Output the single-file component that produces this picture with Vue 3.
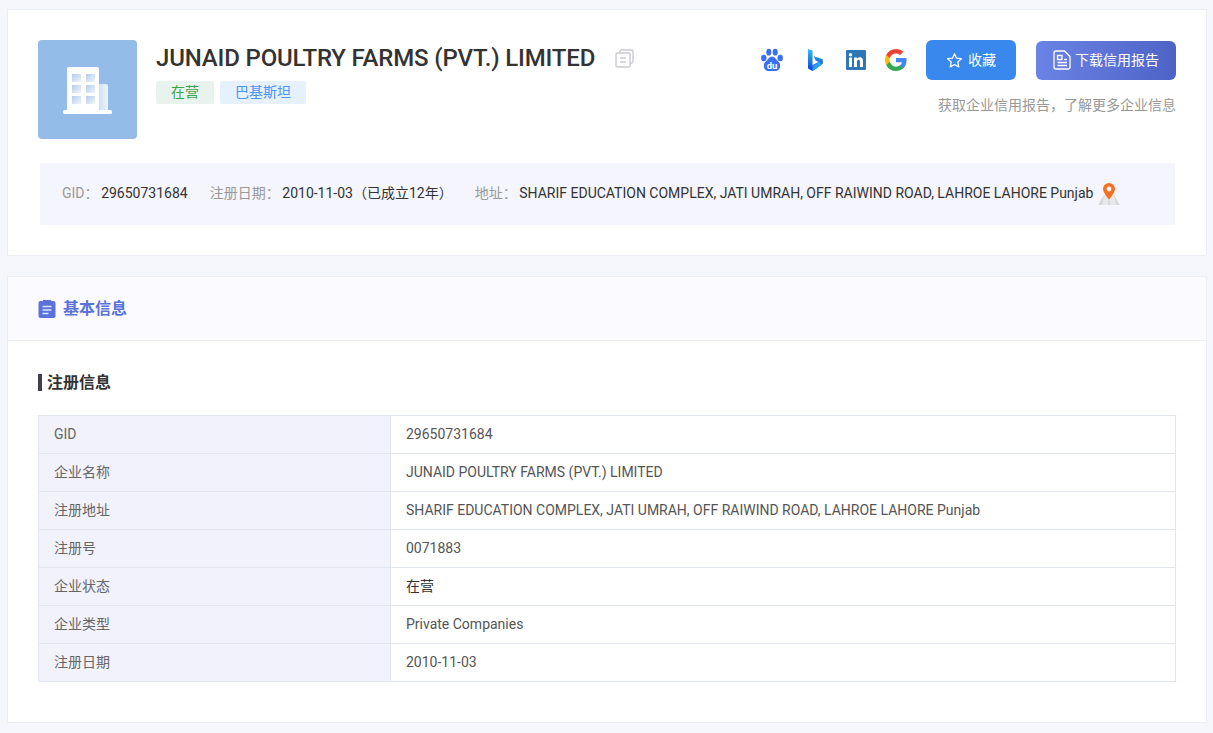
<script setup>
const rows = [
  ['GID', '29650731684'],
  ['企业名称', 'JUNAID POULTRY FARMS (PVT.) LIMITED'],
  ['注册地址', 'SHARIF EDUCATION COMPLEX, JATI UMRAH, OFF RAIWIND ROAD, LAHROE LAHORE Punjab'],
  ['注册号', '0071883'],
  ['企业状态', '在营', true],
  ['企业类型', 'Private Companies'],
  ['注册日期', '2010-11-03'],
]
</script>

<template>
  <div class="page">
    <section class="card head">
      <div class="top">
        <div class="logo">
          <svg width="50" height="50" viewBox="0 0 50 50">
            <defs>
              <linearGradient id="win" x1="0" y1="0" x2="1" y2="1">
                <stop offset="0" stop-color="#b5cdea" />
                <stop offset="1" stop-color="#f0f5fb" />
              </linearGradient>
              <linearGradient id="wing" x1="0" y1="0" x2="1" y2="0">
                <stop offset="0" stop-color="#cfe0f3" />
                <stop offset="1" stop-color="#eef4fb" />
              </linearGradient>
            </defs>
            <path d="M36 18h7a2 2 0 0 1 2 2v25h-9z" fill="url(#wing)" />
            <path d="M4 3a2 2 0 0 1 2-2h28a2 2 0 0 1 2 2v43H4z" fill="#fff" />
            <rect x="0" y="44" width="49" height="4" rx="1.500" fill="#fff" />
            <g fill="url(#win)">
              <rect x="9" y="8" width="9" height="8" /><rect x="23" y="8" width="9" height="8" />
              <rect x="9" y="19" width="9" height="8" /><rect x="23" y="19" width="9" height="8" />
              <rect x="9" y="30" width="9" height="8" /><rect x="23" y="30" width="9" height="8" />
            </g>
          </svg>
        </div>
        <div class="main">
          <div class="title-row">
            <h1>JUNAID POULTRY FARMS (PVT.) LIMITED</h1>
            <svg class="copy" width="19" height="19" viewBox="0 0 19 19" fill="none" stroke="#c9c9d3" stroke-width="1.400">
              <path d="M5 4V2.600A1.600 1.600 0 0 1 6.600 1h9.800A1.600 1.600 0 0 1 18 2.600v9.800a1.600 1.600 0 0 1-1.600 1.600H15" />
              <rect x="1" y="4" width="14" height="14" rx="1.600" />
              <path d="M5 9h6M5 13h6" />
            </svg>
          </div>
          <div class="tags">
            <span class="tag green">在营</span>
            <span class="tag blue">巴基斯坦</span>
          </div>
        </div>
        <div class="side">
          <div class="actions">
            <svg class="ico baidu" width="24" height="24" viewBox="0 0 24 24" fill="#386ff5">
              <ellipse cx="3.800" cy="10" rx="2.700" ry="3.300" />
              <ellipse cx="8.800" cy="4.200" rx="2.500" ry="3.400" />
              <ellipse cx="15.200" cy="4.200" rx="2.500" ry="3.400" />
              <ellipse cx="20.200" cy="10" rx="2.700" ry="3.300" />
              <path d="M12 8.500c2.500 0 3.400 2.400 5 3.800 1.800 1.500 3.200 3 3.200 5.200 0 3.300-2.200 5.500-4.700 5.500H8.500c-2.500 0-4.700-2.200-4.700-5.500 0-2.200 1.400-3.700 3.200-5.200 1.600-1.400 2.500-3.800 5-3.800z" />
              <text x="12" y="21" text-anchor="middle" class="du">du</text>
            </svg>
            <svg class="ico bing" width="24" height="24" viewBox="0 0 24 24">
              <defs>
                <linearGradient id="b1" x1="0" y1="0" x2="0" y2="1">
                  <stop offset="0" stop-color="#37bdf5" />
                  <stop offset="1" stop-color="#0a3fd6" />
                </linearGradient>
                <linearGradient id="b2" x1="0" y1="0" x2="1" y2="1">
                  <stop offset="0" stop-color="#1a6fe8" />
                  <stop offset="1" stop-color="#3fd0f2" />
                </linearGradient>
              </defs>
              <path d="M6 1l4.500 1.600v14.700l6-3.400-2.900-1.400-1.800-4.300 9 3.100v4.500L10.500 23 6 20.500z" fill="url(#b1)" />
              <path d="M10.500 23l8.300-5.200v-2.600L17 12.500l-.5 1.400-6 3.400z" fill="url(#b2)" />
            </svg>
            <svg class="ico li" width="20" height="20" viewBox="0 0 20 20">
              <rect width="20" height="20" rx="1.200" fill="#2e76b4" />
              <rect x="3" y="7.500" width="3" height="9.500" fill="#fff" />
              <circle cx="4.500" cy="4.700" r="1.700" fill="#fff" />
              <path d="M8 7.500h2.900v1.300c.5-.9 1.600-1.500 2.900-1.500 2.600 0 3.200 1.700 3.200 4V17h-3v-5c0-1.200-.2-2.200-1.500-2.200S11 10.800 11 12v5H8z" fill="#fff" />
            </svg>
            <svg class="ico" width="24" height="24" viewBox="0 0 24 24">
              <path fill="#4285f4" d="M22.560 12.250c0-.780-.070-1.530-.200-2.250H12v4.260h5.920a5.060 5.060 0 0 1-2.200 3.320v2.770h3.570c2.080-1.920 3.270-4.740 3.270-8.100z" />
              <path fill="#34a853" d="M12 23c2.970 0 5.460-.980 7.280-2.660l-3.570-2.770c-.980.660-2.230 1.060-3.710 1.060-2.860 0-5.290-1.930-6.160-4.530H2.180v2.840A11 11 0 0 0 12 23z" />
              <path fill="#fbbc05" d="M5.840 14.100a6.600 6.600 0 0 1 0-4.200V7.070H2.180a11 11 0 0 0 0 9.860z" />
              <path fill="#ea4335" d="M12 5.380c1.620 0 3.060.560 4.210 1.640l3.150-3.150C17.450 2.090 14.970 1 12 1A11 11 0 0 0 2.180 7.070L5.840 9.900C6.710 7.310 9.140 5.380 12 5.380z" />
            </svg>
            <button class="btn fav">
              <svg width="17" height="17" viewBox="0 0 24 24" fill="none" stroke="#fff" stroke-width="1.800" stroke-linejoin="round">
                <path d="M12 2.500l2.900 6.200 6.800.8-5 4.700 1.300 6.800-6-3.400-6 3.400 1.300-6.800-5-4.700 6.800-.8z" />
              </svg>
              收藏
            </button>
            <button class="btn dl">
              <svg width="18" height="20" viewBox="0 0 18 20" fill="none" stroke="#fff" stroke-width="1.300">
                <path d="M11.500 1H3a2 2 0 0 0-2 2v14a2 2 0 0 0 2 2h12a2 2 0 0 0 2-2V6.500z" />
                <path d="M4.500 5.500h4.500v4H4.500zM11 9.500h3M4.500 12.500h9.500M4.500 15.500h9.500" />
              </svg>
              下载信用报告
            </button>
          </div>
          <p class="hint">获取企业信用报告，了解更多企业信息</p>
        </div>
      </div>
      <div class="info">
        <span class="k">GID：</span><span class="v g1">29650731684</span>
        <span class="k">注册日期：</span><span class="v g2">2010-11-03（已成立12年）</span>
        <span class="k">地址：</span><span class="v">SHARIF EDUCATION COMPLEX, JATI UMRAH, OFF RAIWIND ROAD, LAHROE LAHORE Punjab</span>
        <svg class="pin" width="24" height="24" viewBox="0 0 24 24">
          <path d="M7 13L1 23h22l-6-10-5 3z" fill="#d9d9db" />
          <path d="M7 13l-1.500 10h5L12 16zM17 13l1.500 10h-5L12 16z" fill="#e8e8ea" />
          <path d="M12 1a6 6 0 0 0-6 6c0 4 6 10.500 6 10.500S18 11 18 7a6 6 0 0 0-6-6z" fill="#f5701f" />
          <circle cx="12" cy="7" r="2.400" fill="#fff" />
        </svg>
      </div>
    </section>

    <section class="card basic">
      <header class="bar">
        <svg width="18" height="19" viewBox="0 0 18 19">
          <path d="M2.500 2H5V1h8v1h2.500A2 2 0 0 1 17.500 4v13a2 2 0 0 1-2 2h-13a2 2 0 0 1-2-2V4a2 2 0 0 1 2-2z" fill="#5a73dc" />
          <path d="M4.500 7.500h9M4.500 11h9M4.500 14.500h6" stroke="#dfe4f8" stroke-width="1.300" />
        </svg>
        <h2>基本信息</h2>
      </header>
      <div class="body">
        <h3>注册信息</h3>
        <table>
          <tr v-for="r in rows" :key="r[0]">
            <th>{{ r[0] }}</th>
            <td :class="{ strong: r[2] }">{{ r[1] }}</td>
          </tr>
        </table>
      </div>
    </section>
  </div>
</template>

<style>
html, body { margin: 0; background: #f6f7fc; }
</style>

<style scoped>
.page {
  padding: 9px 6px 10px 7px;
  font: 14px/20px Roboto, "Noto Sans CJK SC", sans-serif;
  color: #333;
}
.card {
  background: #fff;
  border: 1px solid #ebeef5;
  box-sizing: border-box;
}
.head { height: 247px; padding: 30px 30px 0 30px; }
.top { display: flex; height: 123px; }
.logo {
  width: 99px;
  height: 99px;
  border-radius: 4px;
  background: #93bde8;
  display: flex;
  align-items: center;
  justify-content: center;
  margin-right: 19px;
}
.logo svg { margin-top: 3px; }
.main { flex: 1; }
.title-row { display: flex; align-items: center; height: 36px; }
h1 {
  margin: 0;
  font-size: 24px;
  line-height: 36px;
  font-weight: 500;
  color: #333;
  letter-spacing: -0.16px;
}
.copy { margin-left: 20px; }
.tags { display: flex; gap: 6px; margin-top: 5px; }
.tag {
  height: 23px;
  line-height: 23px;
  border-radius: 2px;
  text-align: center;
  font-size: 14px;
}
.green { width: 58px; background: #e9f3ee; color: #3aa44b; }
.blue { width: 86px; background: #e5f1fd; color: #4c94f5; }
.side { display: flex; flex-direction: column; align-items: flex-end; }
.actions { display: flex; align-items: center; height: 40px; }
.ico { margin-right: 18px; flex: none; }
.baidu { margin-right: 18px; }
.bing { margin-right: 20px; }
.du { font: 700 9.500px Roboto, sans-serif; fill: #fff; }
.btn {
  border: 0;
  height: 40px;
  border-radius: 6px;
  color: #fff;
  font: 14px/20px Roboto, "Noto Sans CJK SC", sans-serif;
  display: flex;
  align-items: center;
  justify-content: center;
  padding: 0;
}
.fav { width: 90px; gap: 5px; background: #3888ee; }
.dl {
  width: 140px;
  height: 39px;
  gap: 4px;
  margin-left: 20px;
  background: linear-gradient(90deg, #6b83e6, #4f63c6);
}
.hint { margin: 15px 0 0; color: #999; line-height: 20px; }
.info {
  margin: 0 0 0 2px;
  width: 1135px;
  height: 62px;
  background: #f4f5fd;
  display: flex;
  align-items: center;
  padding: 0 0 2px 22px;
  box-sizing: border-box;
  white-space: nowrap;
}
.k { color: #999; margin-right: 2.600px; }
.v { color: #333; }
.g1 { margin-right: 22px; }
.g2 { margin-right: 22px; }
.pin { margin: 2px 0 0 4px; flex: none; }
.basic { margin-top: 20px; height: 447px; }
.bar {
  height: 64px;
  display: flex;
  align-items: center;
  gap: 7px;
  padding-left: 30px;
  background: #fafaff;
  border-bottom: 1px solid #ebeef5;
  box-sizing: border-box;
}
h2 { margin: 0; font-size: 16px; font-weight: 700; color: #5a73dc; }
.body { padding: 30px 30px 0; }
h3 {
  margin: 0;
  height: 24px;
  line-height: 24px;
  font-size: 16px;
  font-weight: 700;
  color: #333;
  border-left: 4px solid #3f3f4f;
  border-image: linear-gradient(#0000 4px, #3f3f4f 4px, #3f3f4f 19px, #0000 19px) 1;
  padding-left: 5px;
}
table {
  margin-top: 20px;
  width: 1138px;
  border-collapse: collapse;
  table-layout: fixed;
}
th, td {
  height: 35px;
  border: 1px solid #e1e6f0;
  font-weight: 400;
  text-align: left;
  padding: 0 15px 2px;
  color: #555;
  box-sizing: content-box;
}
th { width: 321px; background: #f1f2fb; color: #666; }
td.strong { color: #333; }
</style>
